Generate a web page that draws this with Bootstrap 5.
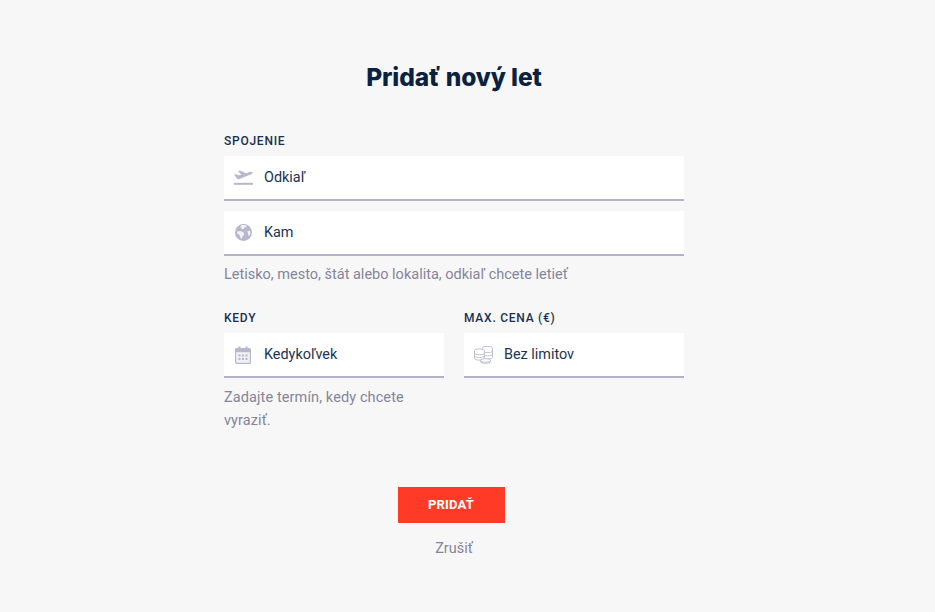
<!DOCTYPE html>
<html lang="sk">
<head>
<meta charset="utf-8">
<title>Pridať nový let</title>
<link rel="stylesheet" href="https://cdn.jsdelivr.net/npm/bootstrap@5.3.0/dist/css/bootstrap.min.css">
<style>
body{background:#f7f7f7;font-family:"Inter","Roboto","Liberation Sans",sans-serif;color:#0c2340;height:612px;overflow:hidden}
.flight-form{width:460px;margin:0 0 0 224px;padding-top:62px}
.page-title{font-family:"Inter",sans-serif;font-size:24.5px;line-height:30px;font-weight:800;color:#0a2240;text-align:center;margin:0 0 41px;letter-spacing:-.1px}
.field-label{display:block;font-family:"Roboto",sans-serif;font-size:12px;line-height:16px;font-weight:500;letter-spacing:.75px;color:#1a3050;margin:0 0 7px}
.field-box{height:45px;background:#fff;border-bottom:2px solid #b3b2c9}
.field-box+.field-box{margin-top:10px}
.field-box .input-group-text{width:40px;padding:0;justify-content:center;background:transparent;border:0;border-radius:0}
.field-box .form-control{height:43px;padding:0;margin-left:0!important;background:transparent;border:0;border-radius:0;box-shadow:none;font-family:"Roboto",sans-serif;font-size:14.4px;color:#0c2340}
.field-box .form-control::placeholder{color:#1a3450;opacity:1}
.field-box svg{display:block;margin-right:2px}
.hint-text{font-family:"Roboto",sans-serif;font-size:14.5px;line-height:23px;color:#85849b;margin:7px 0 0}
.form-cols{margin-top:24px;column-gap:20px}
.form-col{width:220px}
.form-col .hint-text{margin-top:8px;letter-spacing:.1px}
.submit-btn{width:107px;height:36px;padding:0;margin-right:6px;border:0;border-radius:0;background:#ff3b28;color:#fff;font-family:"Roboto",sans-serif;font-size:13px;font-weight:700;letter-spacing:.2px}
.submit-btn:hover{background:#ff3b28;color:#fff}
.actions-area{margin-top:55px}
.cancel-link{display:block;margin-top:15px;font-family:"Roboto",sans-serif;font-size:14.5px;line-height:22px;color:#85849b;text-decoration:none}
</style>
</head>
<body>
<main class="flight-form">
  <h1 class="page-title">Pridať nový let</h1>
  <form>
    <label class="field-label" for="from">SPOJENIE</label>
    <div class="input-group field-box">
      <span class="input-group-text">
        <svg width="19" height="15" viewBox="0 0 19 15" fill="#b8b7cd"><path d="M.3 4.700 2 4l2.200 1.400 3.300-1L4 1.300 6 .6l6 2.600 3.700-1.100c1.300-.4 2.700-.3 3 .4.200.7-.6 1.400-1.700 1.800L5.500 9c-.9.300-1.700.200-2.300-.3L.3 4.700Z"/><rect x="0" y="12.800" width="19" height="2"/></svg>
      </span>
      <input id="from" class="form-control" type="text" placeholder="Odkiaľ">
    </div>
    <div class="input-group field-box">
      <span class="input-group-text">
        <svg width="17" height="17" viewBox="0 0 17 17"><circle cx="8.500" cy="8.500" r="8.500" fill="#b8b7cd"/><path d="M6.500 1.200c1.500-.5 4-.4 5.300.5l-.8 1.500-1.800.2-.4 1.600-1.800.3-.5-1.500-1.300-.6.800-2ZM2 7.500l3.300-.5 2.500 1 1.500 1.600-.6 2-1.300.8-.5 2.400-1.200-.4L4.500 11 2.300 9.800 2 7.500ZM12 7.500l2.800-.8.800 2.300-1.300 3-1-.8-.3-2.200-1-1.500Z" fill="#f1f1f6"/></svg>
      </span>
      <input class="form-control" type="text" placeholder="Kam">
    </div>
    <p class="hint-text">Letisko, mesto, štát alebo lokalita, odkiaľ chcete letieť</p>
    <div class="d-flex form-cols">
      <div class="form-col">
        <label class="field-label" for="when">KEDY</label>
        <div class="input-group field-box">
          <span class="input-group-text">
            <svg width="16" height="18" viewBox="0 0 16 18"><rect x=".6" y="2.600" width="14.800" height="14.800" rx="1" fill="#f0f0f5" stroke="#b8b7cd" stroke-width="1.200"/><rect x="1" y="3" width="14" height="3.200" fill="#b8b7cd"/><rect x="3.500" y="0.500" width="2" height="4" fill="#b8b7cd"/><rect x="10.500" y="0.500" width="2" height="4" fill="#b8b7cd"/><g fill="#b8b7cd"><rect x="3.500" y="8.500" width="2" height="2"/><rect x="7" y="8.500" width="2" height="2"/><rect x="10.500" y="8.500" width="2" height="2"/><rect x="3.500" y="12" width="2" height="2"/><rect x="7" y="12" width="2" height="2"/><rect x="10.500" y="12" width="2" height="2"/></g></svg>
          </span>
          <input id="when" class="form-control" type="text" placeholder="Kedykoľvek">
        </div>
        <p class="hint-text">Zadajte termín, kedy chcete vyraziť.</p>
      </div>
      <div class="form-col">
        <label class="field-label" for="price">MAX. CENA (€)</label>
        <div class="input-group field-box">
          <span class="input-group-text">
            <svg width="19" height="18" viewBox="0 0 19 18" fill="#fff" stroke="#c0bfd2" stroke-width="1"><ellipse cx="13.500" cy="2" rx="5" ry="1.600"/><path d="M8.500 2v9.500c0 .9 2.200 1.600 5 1.600s5-.7 5-1.600V2M8.500 5c0 .9 2.200 1.600 5 1.600s5-.7 5-1.600M8.500 8.200c0 .9 2.200 1.600 5 1.600s5-.7 5-1.600"/><ellipse cx="5.500" cy="4.500" rx="5" ry="1.600"/><path d="M.5 4.500v8c0 .9 2.200 1.600 5 1.600s5-.7 5-1.600v-8M.5 7.200c0 .9 2.200 1.600 5 1.600s5-.7 5-1.600M.5 9.900c0 .9 2.200 1.600 5 1.600s5-.7 5-1.600"/><path d="M6.500 14.500c0-1 2.200-1.800 5-1.800s5 .8 5 1.800v1c0 1-2.200 1.800-5 1.800s-5-.8-5-1.800v-1Z"/><path d="M6.500 14.500c0 1 2.200 1.800 5 1.800s5-.8 5-1.800" fill="none"/></svg>
          </span>
          <input id="price" class="form-control" type="text" placeholder="Bez limitov">
        </div>
      </div>
    </div>
    <div class="actions-area text-center">
      <button class="btn submit-btn" type="button">PRIDAŤ</button>
      <a class="cancel-link" href="#">Zrušiť</a>
    </div>
  </form>
</main>
<script src="https://cdn.jsdelivr.net/npm/bootstrap@5.3.0/dist/js/bootstrap.bundle.min.js"></script>
</body>
</html>
